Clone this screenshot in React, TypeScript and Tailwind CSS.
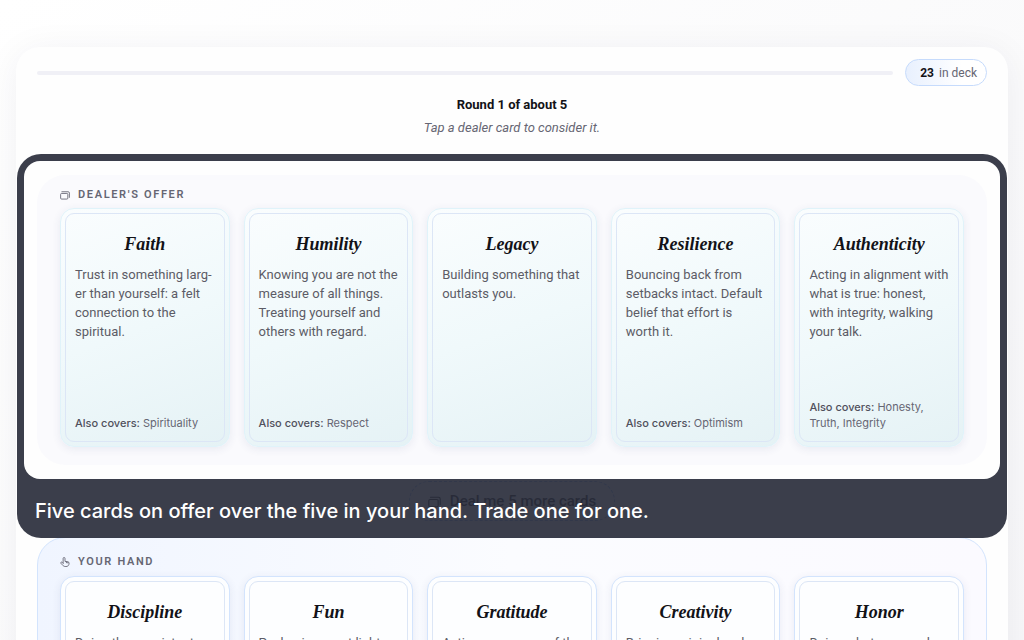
interface ValueCard {
  name: string;
  text: string;
  covers?: string;
}

const offer: ValueCard[] = [
  {
    name: 'Faith',
    text: 'Trust in something larg-\ner than yourself: a felt\nconnection to the\nspiritual.',
    covers: 'Spirituality',
  },
  {
    name: 'Humility',
    text: 'Knowing you are not the\nmeasure of all things.\nTreating yourself and\nothers with regard.',
    covers: 'Respect',
  },
  { name: 'Legacy', text: 'Building something that\noutlasts you.' },
  {
    name: 'Resilience',
    text: 'Bouncing back from\nsetbacks intact. Default\nbelief that effort is\nworth it.',
    covers: 'Optimism',
  },
  {
    name: 'Authenticity',
    text: 'Acting in alignment with\nwhat is true: honest,\nwith integrity, walking\nyour talk.',
    covers: 'Honesty,\nTruth, Integrity',
  },
];

const hand: ValueCard[] = [
  { name: 'Discipline', text: 'Doing the consistent' },
  { name: 'Fun', text: 'Packaging most light' },
  { name: 'Gratitude', text: 'Active awareness of the' },
  { name: 'Creativity', text: 'Bringing original and' },
  { name: 'Honor', text: 'Doing what you need' },
];

function DeckIcon({ size }: { size: number }) {
  return (
    <svg width={size} height={size} viewBox="0 0 16 16" fill="none" stroke="currentColor" strokeWidth="1.4">
      <rect x="1" y="5.5" width="11.5" height="9" rx="1.5" />
      <path d="M3 2.8h10a2 2 0 0 1 2 2v7" strokeLinecap="round" />
    </svg>
  );
}

function HandIcon() {
  return (
    <svg
      width="10"
      height="10"
      viewBox="0 0 16 16"
      fill="none"
      stroke="currentColor"
      strokeWidth="1.4"
      strokeLinecap="round"
      strokeLinejoin="round"
    >
      <path d="M5 10V2.3a1.5 1.5 0 0 1 3 0V7l4.6.7c1.2.2 1.9 1 1.9 2.1 0 3.400-1.700 5.500-5 5.500-2.700 0-4.200-.8-5.300-2.300L1.400 10a1.300 1.300 0 0 1 2-1.600L5 10" />
      <path d="M10.300 7.600v1.600M12.500 8v1.600" />
    </svg>
  );
}

function Card({ card, tinted }: { card: ValueCard; tinted?: boolean }) {
  const look = tinted
    ? 'border-[#e0f3fa] bg-linear-160 from-[#fafdfe] via-[#f0f9fb] to-[#e5f2f5]'
    : 'border-[#d3e4fd] bg-[#fdfeff]';
  return (
    <button
      type="button"
      className={`flex min-h-[239px] min-w-0 flex-1 rounded-[14px] border p-1 text-left shadow-[0_2px_8px_rgba(60,70,120,0.09)] ${look}`}
    >
      <span className="flex w-full flex-col self-stretch rounded-[9px] border border-[#dce6f6] px-[9px] pt-[18px] pb-[10px]">
        <span className="text-center font-['Liberation_Serif',serif] text-lg leading-6 font-bold text-[#121217] italic">
          {card.name}
        </span>
        <span className="mt-[9px] text-[13px] leading-[19px] whitespace-pre text-[#5c5c66]">{card.text}</span>
        {card.covers && (
          <span className="mt-auto font-['Inter',sans-serif] text-[11px] leading-4 whitespace-pre text-[#666673]">
            <b className="font-medium text-[#50505c]">Also covers:</b> {card.covers}
          </span>
        )}
      </span>
    </button>
  );
}

export default function App() {
  return (
    <div className="min-h-screen bg-linear-to-br from-white to-[#f6f6f8] px-4 pt-[47px] font-['Roboto','Liberation_Sans',sans-serif]">
      <main className="rounded-3xl bg-[#fefefe] px-[21px] pt-3 pb-6 shadow-[0_4px_36px_rgba(40,40,60,0.06)]">
        <header className="flex items-center gap-3">
          <div className="h-1 flex-1 rounded-full bg-[#f0f0f6]" />
          <div className="flex h-[27px] items-center gap-[5px] rounded-full border border-[#c6dbfc] bg-linear-to-r from-[#e8f0fe] to-white to-70% px-[9px] pl-[14px] text-xs text-[#666673]">
            <b className="font-bold text-[#121217]">23</b> in deck
          </div>
        </header>
        <h1 className="mt-2 text-center text-[13px] leading-[22px] font-bold text-[#121217]">Round 1 of about 5</h1>
        <p className="mt-[2px] text-center text-[13px] leading-5 text-[#666673] italic">
          Tap a dealer card to consider it.
        </p>

        {/* coach mark framing the dealer's row */}
        <div className="relative z-10 -mx-5 mt-4 rounded-3xl bg-[#2a2e3c]/92 p-[7px] pb-0">
          <div className="rounded-2xl bg-[#fefefe] px-[13px] py-[14px]">
            <section className="rounded-[28px] bg-[#fafafd] px-[23px] pt-3 pb-[18px]">
              <h2 className="flex items-center gap-2 text-[11px] leading-[15px] font-semibold tracking-[0.15em] text-[#666673]">
                <DeckIcon size={10} />
                DEALER'S OFFER
              </h2>
              <div className="mt-[6px] flex gap-[14px]">
                {offer.map((card) => (
                  <Card key={card.name} card={card} tinted />
                ))}
              </div>
            </section>
          </div>
          <p className="px-[11px] pt-4 pb-[11px] font-['Inter',sans-serif] text-xl leading-8 font-medium text-white">
            Five cards on offer over the five in your hand. Trade one for one.
          </p>
        </div>

        <div className="-mt-[57px] flex justify-center">
          <button
            type="button"
            className="flex h-10 items-center gap-[9px] rounded-full border border-dashed border-[#8fb2f0] bg-[#f6f9ff] px-[18px] text-[15px] font-medium text-[#121217]"
          >
            <DeckIcon size={13} />
            Deal me 5 more cards
          </button>
        </div>

        <section className="mt-4 rounded-[28px] border border-[#d3e4fd] bg-linear-to-r from-[#f0f5ff] via-[#fbfcff] to-[#fbfaff] px-[22px] pt-4 pb-[18px]">
          <h2 className="flex items-center gap-2 text-[11px] leading-[15px] font-semibold tracking-[0.15em] text-[#666673]">
            <HandIcon />
            YOUR HAND
          </h2>
          <div className="mt-[7px] flex gap-[14px]">
            {hand.map((card) => (
              <Card key={card.name} card={card} />
            ))}
          </div>
        </section>
      </main>
    </div>
  );
}
